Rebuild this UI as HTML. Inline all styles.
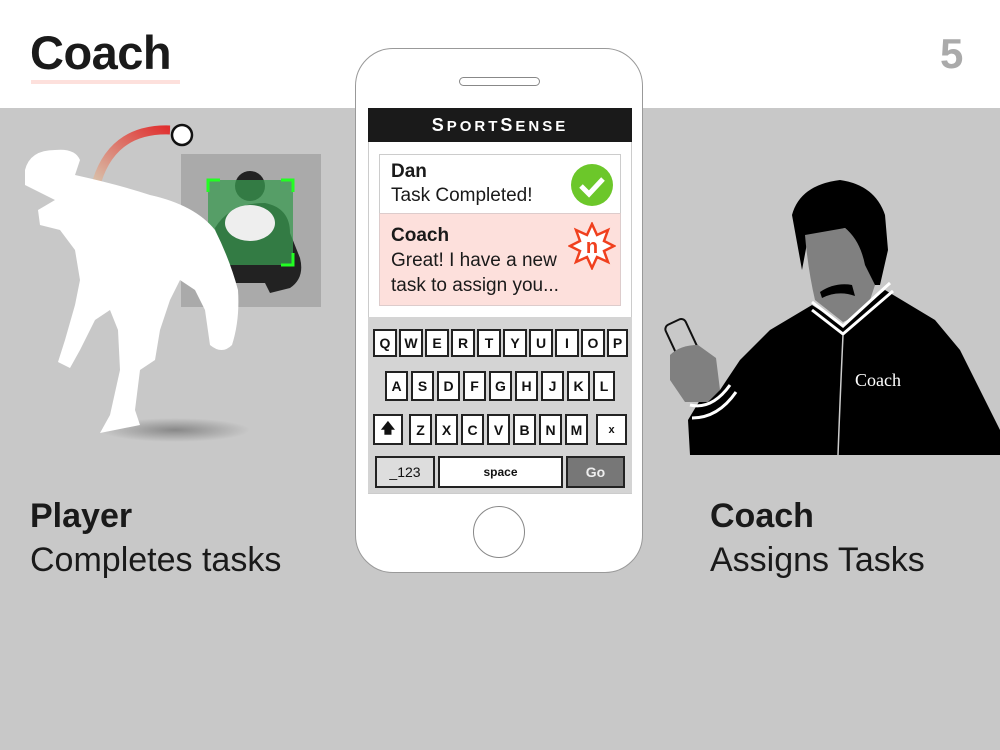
<!DOCTYPE html>
<html><head><meta charset="utf-8"><style>
*{margin:0;padding:0;box-sizing:border-box}
body{width:1000px;height:750px;position:relative;overflow:hidden;background:#fff;font-family:"Liberation Sans",sans-serif;color:#1a1a1a}
.abs{position:absolute}
.band{left:0;top:108px;width:1000px;height:642px;background:#c8c8c8}
.key{position:absolute;background:#fff;border:2px solid #222;font:bold 14px "Liberation Sans",sans-serif;display:flex;align-items:center;justify-content:center;color:#111}
.lbl{font-size:34px;line-height:44px}
</style></head><body>
<div class="abs band"></div>
<div class="abs" style="left:31px;top:80px;width:149px;height:4px;background:#fde0dc"></div>
<div class="abs" style="left:30px;top:25px;font-size:47px;font-weight:bold;letter-spacing:-0.5px">Coach</div>
<div class="abs" style="left:940px;top:30px;font-size:42px;font-weight:bold;color:#aaa">5</div>

<svg class="abs" style="left:0;top:0" width="1000" height="470">
<defs><linearGradient id="g" x1="0" y1="1" x2="1" y2="0"><stop offset="0" stop-color="#d8c8b0"/><stop offset="1" stop-color="#e03030"/></linearGradient>
<radialGradient id="sh"><stop offset="0" stop-color="#888"/><stop offset="1" stop-color="#c8c8c8"/></radialGradient></defs>
<ellipse cx="175" cy="430" rx="75" ry="12" fill="url(#sh)"/>
<rect x="181" y="154" width="140" height="153" fill="#aaa"/>
<circle cx="250" cy="186" r="15" fill="#222"/>
<path d="M215 228 Q230 203 265 203 Q290 208 290 233 L300 258 Q305 278 290 288 L270 293 L265 283 L225 283 L220 258Z" fill="#222"/>
<rect x="208" y="180" width="85" height="85" fill="#3a9a50" opacity="0.75"/>
<ellipse cx="250" cy="223" rx="25" ry="18" fill="#eee"/>
<path d="M208 192V180h12M281 180h12v12M293 253v12h-12M220 265h-12v-12" stroke="#2f2" stroke-width="3" fill="none"/>
<path d="M95 188 Q110 128 170 130" stroke="url(#g)" stroke-width="9" fill="none"/>
<circle cx="182" cy="135" r="10" fill="#fff" stroke="#111" stroke-width="2.5"/>
<path d="M25 170 Q30 150 55 150 Q75 148 80 160 L75 175 Q120 185 150 195 Q195 205 215 230 Q230 260 238 290 Q240 320 232 345 Q222 355 210 345 L205 310 L195 290 L180 280 L170 300 L160 330 L155 360 L140 370 L135 410 L140 425 L100 433 L110 415 L120 370 L118 330 L110 310 L95 320 L80 350 L70 368 L58 362 L65 340 L75 305 L80 280 L75 250 L60 230 L40 225 L38 210 L55 200 L45 195 L25 185Z" fill="#fff"/>

<path d="M690 455 L688 420 L700 400 L720 390 L740 360 L770 330 L812 305 L843 325 L885 290 L935 320 L960 350 L985 400 L1000 430 L1000 455Z" fill="#000"/>
<path d="M792 215 Q800 185 840 180 Q875 185 885 215 L888 250 L880 285 L868 285 Q860 240 845 228 L808 238 L802 270Z" fill="#000"/>
<path d="M805 235 L845 228 Q860 240 865 265 L875 285 L870 300 Q860 315 843 322 L815 300 Q808 270 805 235Z" fill="#808080"/>
<path d="M820 292 Q835 282 852 285 L855 296 Q838 290 822 298Z" fill="#000"/>
<path d="M812 302 L843 326 L890 283" stroke="#fff" stroke-width="3" fill="none"/>
<path d="M812 310 L843 334 L893 291" stroke="#fff" stroke-width="3" fill="none"/>
<path d="M843 335 Q840 400 838 455" stroke="#ccc" stroke-width="1.5" fill="none"/>
<path d="M690 405 Q712 410 730 385" stroke="#fff" stroke-width="3" fill="none"/>
<path d="M692 418 Q718 418 736 392" stroke="#fff" stroke-width="3" fill="none"/>
<rect x="672" y="320" width="22" height="45" rx="5" transform="rotate(-25 683 342)" fill="none" stroke="#111" stroke-width="2"/>
<path d="M670 355 Q680 345 698 345 L716 358 L720 390 L708 402 L685 402 L670 380Z" fill="#808080"/>
<text x="855" y="386" font-family="Liberation Serif,serif" font-size="18" fill="#fff">Coach</text>
</svg>

<div class="abs" style="left:355px;top:48px;width:288px;height:525px;background:#fff;border:1.5px solid #999;border-radius:38px"></div>
<div class="abs" style="left:459px;top:77px;width:81px;height:9px;border:1.5px solid #888;border-radius:5px"></div>
<div class="abs" style="left:473px;top:506px;width:52px;height:52px;border:1.5px solid #888;border-radius:50%"></div>
<div class="abs" style="left:368px;top:108px;width:264px;height:386px;background:#fff;border:1px solid #ccc"></div>
<div class="abs" style="left:368px;top:108px;width:264px;height:34px;background:#1a1a1a;color:#fff;font:bold 18px 'Liberation Sans',sans-serif;letter-spacing:3px;text-align:center;line-height:34px">S<span style="font-size:15px">PORT</span>S<span style="font-size:15px">ENSE</span></div>
<div class="abs" style="left:379px;top:154px;width:242px;height:60px;border:1px solid #ccc;background:#fff;padding:5px 11px;font-size:19px;line-height:24px"><b>Dan</b><br>Task Completed!</div>
<svg class="abs" style="left:570px;top:163px" width="44" height="44"><circle cx="22" cy="22" r="21" fill="#6cc72a"/><path d="M11 23l8 8 14-15" stroke="#fff" stroke-width="5" fill="none"/></svg>
<div class="abs" style="left:379px;top:213px;width:242px;height:93px;border:1px solid #dcc;background:#fde0dc;padding:9px 11px;font-size:19px;line-height:25px"><b>Coach</b><br>Great! I have a new<br>task to assign you...</div>
<svg class="abs" style="left:568px;top:222px" width="48" height="48"><polygon points="24,2 29,13 40,8 36,19 46,24 36,29 40,40 29,35 24,46 19,35 8,40 12,29 2,24 12,19 8,8 19,13" fill="#fff" stroke="#f0401e" stroke-width="2.5"/><text x="24" y="31" text-anchor="middle" font-family="Liberation Sans" font-weight="bold" font-size="20" fill="#f0401e">n</text></svg>
<div class="abs" style="left:368px;top:317px;width:264px;height:176px;background:#d4d4d4"></div>
<div class="key" style="left:373px;top:329px;width:24px;height:28px">Q</div>
<div class="key" style="left:399px;top:329px;width:24px;height:28px">W</div>
<div class="key" style="left:425px;top:329px;width:24px;height:28px">E</div>
<div class="key" style="left:451px;top:329px;width:24px;height:28px">R</div>
<div class="key" style="left:477px;top:329px;width:24px;height:28px">T</div>
<div class="key" style="left:503px;top:329px;width:24px;height:28px">Y</div>
<div class="key" style="left:529px;top:329px;width:24px;height:28px">U</div>
<div class="key" style="left:555px;top:329px;width:24px;height:28px">I</div>
<div class="key" style="left:581px;top:329px;width:24px;height:28px">O</div>
<div class="key" style="left:607px;top:329px;width:21px;height:28px">P</div>
<div class="key" style="left:385px;top:371px;width:23px;height:30px">A</div>
<div class="key" style="left:411px;top:371px;width:23px;height:30px">S</div>
<div class="key" style="left:437px;top:371px;width:23px;height:30px">D</div>
<div class="key" style="left:463px;top:371px;width:23px;height:30px">F</div>
<div class="key" style="left:489px;top:371px;width:23px;height:30px">G</div>
<div class="key" style="left:515px;top:371px;width:23px;height:30px">H</div>
<div class="key" style="left:541px;top:371px;width:23px;height:30px">J</div>
<div class="key" style="left:567px;top:371px;width:23px;height:30px">K</div>
<div class="key" style="left:593px;top:371px;width:22px;height:30px">L</div>
<div class="key" style="left:373px;top:414px;width:30px;height:31px">🡅</div>
<div class="key" style="left:409px;top:414px;width:23px;height:31px">Z</div>
<div class="key" style="left:435px;top:414px;width:23px;height:31px">X</div>
<div class="key" style="left:461px;top:414px;width:23px;height:31px">C</div>
<div class="key" style="left:487px;top:414px;width:23px;height:31px">V</div>
<div class="key" style="left:513px;top:414px;width:23px;height:31px">B</div>
<div class="key" style="left:539px;top:414px;width:23px;height:31px">N</div>
<div class="key" style="left:565px;top:414px;width:23px;height:31px">M</div>
<div class="key" style="left:596px;top:414px;width:31px;height:31px;font-size:11px">x</div>
<div class="key" style="left:375px;top:456px;width:60px;height:32px;background:#ddd;font-weight:normal">_123</div>
<div class="key" style="left:438px;top:456px;width:125px;height:32px;font-size:12px">space</div>
<div class="key" style="left:566px;top:456px;width:59px;height:32px;background:#777;color:#eee">Go</div>

<div class="abs lbl" style="left:30px;top:494px;font-weight:bold">Player</div>
<div class="abs lbl" style="left:30px;top:538px">Completes tasks</div>
<div class="abs lbl" style="left:710px;top:494px;font-weight:bold">Coach</div>
<div class="abs lbl" style="left:710px;top:538px">Assigns Tasks</div>
</body></html>
